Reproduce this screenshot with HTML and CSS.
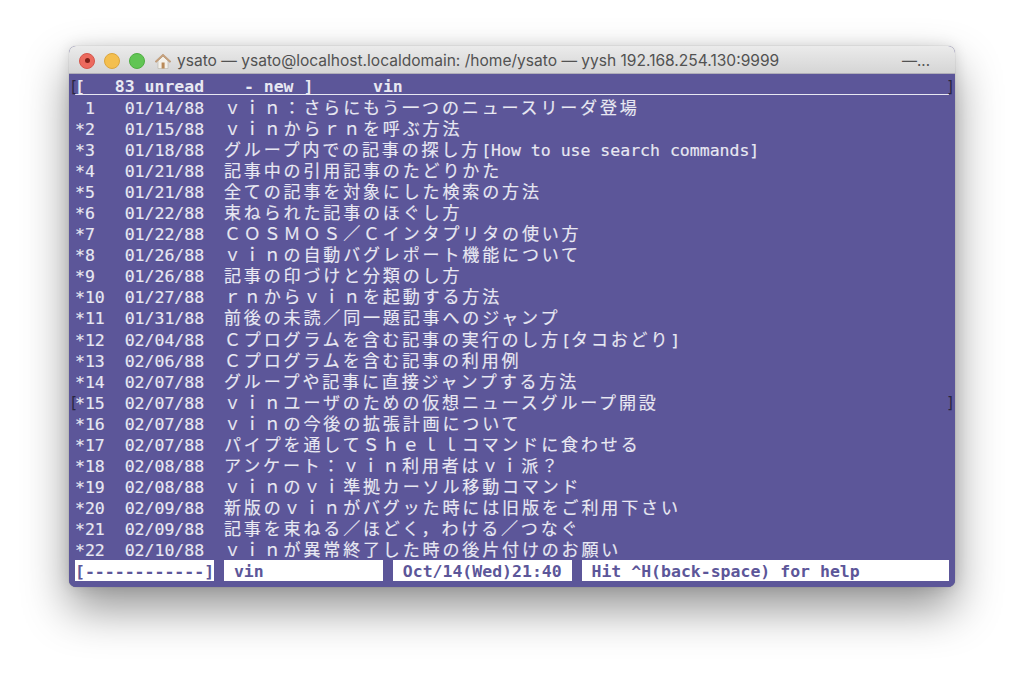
FILE: index.html
```html
<!DOCTYPE html>
<html lang="ja">
<head>
<meta charset="utf-8">
<title>ysato</title>
<link rel="stylesheet" href="styles.css">
</head>
<body>
<div class="window">
  <div class="titlebar">
    <span class="light red"><i></i></span>
    <span class="light yellow"></span>
    <span class="light green"></span>
    <svg class="home" width="18" height="18" viewBox="0 0 18 18">
      <path d="M4 8.5V16.5H14V8.5L9 4Z" fill="#f4f1ea" stroke="#b9b4aa" stroke-width=".6"/>
      <path d="M1 9.5L9 2L17 9.5L15.8 10.4L9 4.2L2.2 10.4Z" fill="#c9a27c" stroke="#a8845f" stroke-width=".4"/>
      <rect x="7.6" y="10.5" width="3" height="6" fill="#b98a58"/>
    </svg>
    <span class="title">ysato — ysato@localhost.localdomain: /home/ysato — yysh 192.168.254.130:9999</span>
    <span class="more">—...</span>
  </div>
  <div class="term">
    <span class="mark ml1">[</span><span class="mark mr1">]</span>
    <span class="mark ml2">[</span><span class="mark mr2">]</span>
    <div class="head"><span class="h1">[   83 unread    - new ]</span><span class="h2">vin</span></div>
    <div class="row"><span class="num"> 1</span><span class="date">01/14/88</span><span class="j">ｖｉｎ：さらにもう一つのニュースリーダ登場</span></div>
    <div class="row"><span class="num">*2</span><span class="date">01/15/88</span><span class="j">ｖｉｎからｒｎを呼ぶ方法</span></div>
    <div class="row"><span class="num">*3</span><span class="date">01/18/88</span><span class="j">グループ内での記事の探し方</span><span class="a">[How to use search commands]</span></div>
    <div class="row"><span class="num">*4</span><span class="date">01/21/88</span><span class="j">記事中の引用記事のたどりかた</span></div>
    <div class="row"><span class="num">*5</span><span class="date">01/21/88</span><span class="j">全ての記事を対象にした検索の方法</span></div>
    <div class="row"><span class="num">*6</span><span class="date">01/22/88</span><span class="j">束ねられた記事のほぐし方</span></div>
    <div class="row"><span class="num">*7</span><span class="date">01/22/88</span><span class="j">ＣＯＳＭＯＳ／Ｃインタプリタの使い方</span></div>
    <div class="row"><span class="num">*8</span><span class="date">01/26/88</span><span class="j">ｖｉｎの自動バグレポート機能について</span></div>
    <div class="row"><span class="num">*9</span><span class="date">01/26/88</span><span class="j">記事の印づけと分類のし方</span></div>
    <div class="row"><span class="num">*10</span><span class="date">01/27/88</span><span class="j">ｒｎからｖｉｎを起動する方法</span></div>
    <div class="row"><span class="num">*11</span><span class="date">01/31/88</span><span class="j">前後の未読／同一題記事へのジャンプ</span></div>
    <div class="row"><span class="num">*12</span><span class="date">02/04/88</span><span class="j">Ｃプログラムを含む記事の実行のし方</span><span class="a">[</span><span class="j">タコおどり</span><span class="a">]</span></div>
    <div class="row"><span class="num">*13</span><span class="date">02/06/88</span><span class="j">Ｃプログラムを含む記事の利用例</span></div>
    <div class="row"><span class="num">*14</span><span class="date">02/07/88</span><span class="j">グループや記事に直接ジャンプする方法</span></div>
    <div class="row"><span class="num">*15</span><span class="date">02/07/88</span><span class="j">ｖｉｎユーザのための仮想ニュースグループ開設</span></div>
    <div class="row"><span class="num">*16</span><span class="date">02/07/88</span><span class="j">ｖｉｎの今後の拡張計画について</span></div>
    <div class="row"><span class="num">*17</span><span class="date">02/07/88</span><span class="j">パイプを通してＳｈｅｌｌコマンドに食わせる</span></div>
    <div class="row"><span class="num">*18</span><span class="date">02/08/88</span><span class="j">アンケート：ｖｉｎ利用者はｖｉ派？</span></div>
    <div class="row"><span class="num">*19</span><span class="date">02/08/88</span><span class="j">ｖｉｎのｖｉ準拠カーソル移動コマンド</span></div>
    <div class="row"><span class="num">*20</span><span class="date">02/09/88</span><span class="j">新版のｖｉｎがバグッた時には旧版をご利用下さい</span></div>
    <div class="row"><span class="num">*21</span><span class="date">02/09/88</span><span class="j">記事を束ねる／ほどく，わける／つなぐ</span></div>
    <div class="row"><span class="num">*22</span><span class="date">02/10/88</span><span class="j">ｖｉｎが異常終了した時の後片付けのお願い</span></div>
    <div class="status">
      <span class="box b1">[------------]</span>
      <span class="box b2">vin</span>
      <span class="box b3">Oct/14(Wed)21:40</span>
      <span class="box b4">Hit ^H(back-space) for help</span>
    </div>
  </div>
</div>
</body>
</html>
```

FILE: styles.css
```css
* { box-sizing: border-box; }
html, body { margin: 0; height: 100%; background: #fff; overflow: hidden; }
body { padding: 46px 69px 0; }
.window {
  width: 886px;
  height: 541px;
  border-radius: 7px;
  box-shadow: 0 22px 46px rgba(0,0,0,.42), 0 0 14px rgba(0,0,0,.12), 0 0 1px rgba(0,0,0,.35);
  background: #5c5699;
}
.titlebar {
  height: 28px;
  display: flex;
  align-items: center;
  padding: 2px 0 0 10px;
  border-radius: 7px 7px 0 0;
  background: linear-gradient(#ebebeb, #d5d5d5);
  border-bottom: 1px solid #b0aeb8;
  font-family: "Inter", "Liberation Sans", sans-serif;
  color: #525252;
}
.light { width: 16px; height: 16px; border-radius: 50%; margin-right: 9px; display: flex; align-items: center; justify-content: center; flex: none; }
.red { background: #ec6a5e; border: 1px solid #d5564b; }
.red i { width: 5px; height: 5px; border-radius: 50%; background: #7e1f17; }
.yellow { background: #f4bf4f; border: 1px solid #dca63c; }
.green { background: #61c554; border: 1px solid #4fae42; }
.home { margin-left: 0; margin-right: 5px; flex: none; }
.title { font-size: 15.55px; white-space: nowrap; }
.more { margin-left: auto; margin-right: 25px; font-size: 15px; }
.term {
  position: relative;
  height: 513px;
  padding: 3px 6px 0;
  font-family: "DejaVu Sans Mono", "Noto Sans CJK JP", monospace;
  font-size: 16.5px;
  color: #e8e8f2;
  border-radius: 0 0 7px 7px;
  background: #5c5699;
}
.head {
  height: 18px;
  line-height: 19px;
  font-weight: bold;
  border-bottom: 1.5px solid #e8e8f2;
  margin-bottom: 3px;
  display: flex;
}
.h1 { width: 30ch; white-space: pre; flex: none; }
.row { height: 21.05px; line-height: 21px; display: flex; white-space: nowrap; -webkit-text-stroke: .15px #e8e8f2; }
.num { width: 5ch; flex: none; white-space: pre; }
.date { width: 10ch; flex: none; }
.j { font-family: "Noto Sans CJK JP", sans-serif; font-size: 17px; letter-spacing: 2.86px; margin-top: -2px; }
.status { display: flex; gap: 1ch; margin-top: -1px; height: 21px; font-weight: bold; line-height: 23px; color: #5c5699; }
.box { background: #fff; display: block; height: 21px; flex: none; white-space: pre; overflow: hidden; }
.b1 { width: 14ch; }
.b2 { width: 16ch; padding-left: 1ch; }
.b3 { width: 18ch; padding-left: 1ch; }
.b4 { width: 37ch; padding-left: 1ch; }
.mark { position: absolute; color: #2a2740; font-size: 15px; font-weight: normal; line-height: 18px; }
.ml1 { left: 0; top: 4px; }
.mr1 { right: 0; top: 4px; }
.ml2 { left: 0; top: 320px; }
.mr2 { right: 0; top: 320px; }
```
